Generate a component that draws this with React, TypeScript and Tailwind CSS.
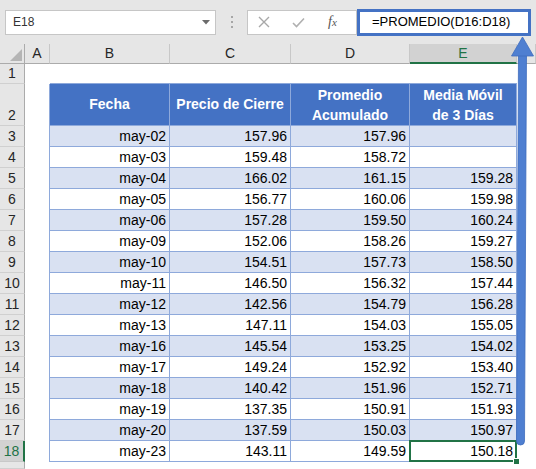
import React from "react";

type Row = [string, string, string, string];

const data: Row[] = [
  ["may-02", "157.96", "157.96", ""],
  ["may-03", "159.48", "158.72", ""],
  ["may-04", "166.02", "161.15", "159.28"],
  ["may-05", "156.77", "160.06", "159.98"],
  ["may-06", "157.28", "159.50", "160.24"],
  ["may-09", "152.06", "158.26", "159.27"],
  ["may-10", "154.51", "157.73", "158.50"],
  ["may-11", "146.50", "156.32", "157.44"],
  ["may-12", "142.56", "154.79", "156.28"],
  ["may-13", "147.11", "154.03", "155.05"],
  ["may-16", "145.54", "153.25", "154.02"],
  ["may-17", "149.24", "152.92", "153.40"],
  ["may-18", "140.42", "151.96", "152.71"],
  ["may-19", "137.35", "150.91", "151.93"],
  ["may-20", "137.59", "150.03", "150.97"],
  ["may-23", "143.11", "149.59", "150.18"],
];

function RowHdr({ n, active }: { n?: number; active?: boolean }) {
  return (
    <div
      className={
        active
          ? "flex items-end justify-center bg-[#d2d2d2] text-[#217346] border-b border-[#c8c8c8] border-r-2 border-r-[#217346] leading-[20px]"
          : "flex items-end justify-center bg-[#e6e6e6] text-[#262626] border-b border-[#d0d0d0] border-r border-r-[#ababab] leading-[20px]"
      }
    >
      {n}
    </div>
  );
}

export default function App() {
  const headers = ["A", "B", "C", "D", "E", ""];
  return (
    <div className="relative w-[536px] h-[469px] overflow-hidden bg-white text-[14px] font-['Liberation_Sans',Arial,sans-serif]">
      {/* Formula bar */}
      <div className="flex items-center h-[44px] pl-[5px] bg-[#e6e6e6]">
        <div className="flex items-center w-[211px] h-[25px] bg-white border border-[#c6c6c6] pl-[7px] text-[12px] text-[#333]">
          <span>E18</span>
          <svg className="ml-auto mr-[5px]" width="8" height="5" viewBox="0 0 8 5">
            <polygon points="0,0 8,0 4,4.5" fill="#6b6b6b" />
          </svg>
        </div>
        <div className="flex w-[31px] justify-center">
          <div className="flex flex-col gap-[3px]">
            <div className="w-[2px] h-[2px] bg-[#a6a6a6]" />
            <div className="w-[2px] h-[2px] bg-[#a6a6a6]" />
            <div className="w-[2px] h-[2px] bg-[#a6a6a6]" />
          </div>
        </div>
        <div className="flex items-center w-[110px] h-[25px] bg-white border border-[#c6c6c6]">
          <svg className="ml-[10px]" width="12" height="12" viewBox="0 0 12 12">
            <path d="M1 1 L11 11 M11 1 L1 11" stroke="#a8a8a8" strokeWidth="1.4" />
          </svg>
          <svg className="ml-[22px]" width="13" height="11" viewBox="0 0 13 11">
            <path d="M1 6 L4.5 9.5 L12 1.5" stroke="#b0b0b0" strokeWidth="1.6" fill="none" />
          </svg>
          <span className="ml-[23px] italic text-[#555] text-[14px] font-['Liberation_Serif',serif] leading-none">
            f<span className="text-[11px]">x</span>
          </span>
        </div>
        <div className="flex items-center w-[174px] h-[27px] bg-white border-[3px] border-[#4472c4] pl-[12px] text-[13px] text-black">
          =PROMEDIO(D16:D18)
        </div>
      </div>

      {/* Sheet */}
      <div className="grid grid-cols-[25px_25px_120px_121px_119px_107px_1fr] grid-rows-[20px_20px_42px_repeat(16,21px)_1fr] h-[425px]">
        {/* column headers */}
        <div className="relative bg-[#e6e6e6] border-b border-[#ababab] border-r border-r-[#ababab]">
          <svg className="absolute left-0 top-0" width="25" height="20" viewBox="0 0 25 20">
            <polygon points="10,17 22,17 22,5" fill="#b5b5b5" />
          </svg>
        </div>
        {headers.map((h, i) =>
          h === "E" ? (
            <div
              key={i}
              className="flex items-center justify-center bg-[#d2d2d2] text-[#217346] border-b-2 border-[#217346] border-r border-r-[#c8c8c8]"
            >
              {h}
            </div>
          ) : (
            <div
              key={i}
              className="flex items-center justify-center bg-[#e6e6e6] text-[#262626] border-b border-[#ababab] border-r border-r-[#c8c8c8]"
            >
              {h}
            </div>
          )
        )}

        {/* row 1 */}
        <RowHdr n={1} />
        <div />
        <div className="border-b border-[#8ea9db]" />
        <div className="border-b border-[#8ea9db]" />
        <div className="border-b border-[#8ea9db]" />
        <div className="border-b border-[#8ea9db]" />
        <div />

        {/* row 2 header */}
        <RowHdr n={2} />
        <div className="border-r border-[#8ea9db]" />
        <div className="flex items-center justify-center bg-[#4472c4] text-white font-bold border-r border-b border-[#8ea9db]">
          Fecha
        </div>
        <div className="flex items-center justify-center bg-[#4472c4] text-white font-bold border-r border-b border-[#8ea9db]">
          Precio de Cierre
        </div>
        <div className="flex items-center justify-center text-center leading-[20px] bg-[#4472c4] text-white font-bold border-r border-b border-[#8ea9db]">
          Promedio
          <br />
          Acumulado
        </div>
        <div className="flex items-center justify-center text-center leading-[20px] bg-[#4472c4] text-white font-bold border-r border-b border-[#8ea9db]">
          Media Móvil
          <br />
          de 3 Días
        </div>
        <div />

        {data.map((r, i) => {
          const n = i + 3;
          const band = i % 2 === 0 ? "bg-[#d9e1f2]" : "bg-white";
          const last = n === 18;
          return (
            <React.Fragment key={n}>
              <RowHdr n={n} active={last} />
              <div className="border-r border-[#8ea9db]" />
              {r.map((v, j) => (
                <div
                  key={j}
                  className={`relative flex items-end justify-end pr-[3px] leading-[20px] text-black border-r border-b border-[#8ea9db] ${band}`}
                >
                  {v}
                  {last && j === 3 && (
                    <>
                      <div className="absolute left-[-1px] top-[-1px] right-[-1px] bottom-[-1px] border-2 border-[#217346]" />
                      <div className="absolute right-[-4px] bottom-[-4px] w-[7px] h-[7px] bg-[#217346] border border-white" />
                    </>
                  )}
                </div>
              ))}
              <div />
            </React.Fragment>
          );
        })}

        {/* row 19 (cut off) */}
        <RowHdr />
        <div />
        <div />
        <div />
        <div />
        <div />
        <div />
      </div>

      {/* Annotation arrow */}
      <svg
        className="absolute left-0 top-0 pointer-events-none"
        width="536"
        height="469"
        viewBox="0 0 536 469"
      >
        <path
          d="M518.5 54 L516.5 441 A4 4 0 0 0 524.5 441 L526.5 54 Z"
          fill="#4f7fd1"
          stroke="#3f6cbd"
          strokeWidth="0.8"
        />
        <polygon points="522.5,37 511.5,56 533.5,56" fill="#4f7fd1" stroke="#3f6cbd" strokeWidth="0.8" />
      </svg>
    </div>
  );
}
